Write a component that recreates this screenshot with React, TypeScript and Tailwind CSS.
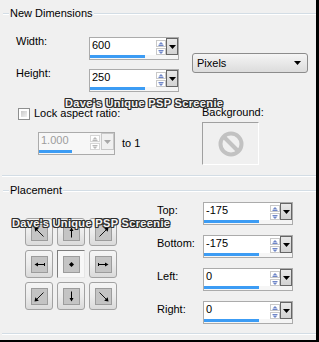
import type { ReactNode } from 'react';

const rule = 'h-[2px] border-t border-[#d3dde5] bg-white';

function GroupTitle({ label }: { label: string }) {
  return (
    <div className="flex h-[13px] items-center">
      <div className={`ml-[3px] w-[6px] ${rule}`} />
      <span className="px-[1px] leading-[13px]">{label}</span>
      <div className={`flex-1 ${rule}`} />
    </div>
  );
}

function SpinArrow({ up, disabled }: { up?: boolean; disabled?: boolean }) {
  const c = disabled ? '#b8b8b8' : '#6f86c8';
  return (
    <div className={`flex h-[7px] w-[10px] items-center justify-center border ${disabled ? 'border-[#d6d6d6]' : 'border-[#c9c9c9]'} bg-white`}>
      <svg width="6" height="4" viewBox="0 0 6 4">
        {up ? (
          <>
            <path d="M0.5 2.5h5L3 0z" fill={c} />
            <path d="M0.5 3.5h5" stroke={c} strokeWidth="1" />
          </>
        ) : (
          <>
            <path d="M0.5 1.5h5L3 4z" fill={c} />
            <path d="M0.5 0.5h5" stroke={c} strokeWidth="1" />
          </>
        )}
      </svg>
    </div>
  );
}

function SpinBox({ value, disabled }: { value: string; disabled?: boolean }) {
  return (
    <div
      className={`flex h-[23px] border border-[#ababab] ${disabled ? 'w-[77px] bg-[#f3f3f3]' : 'w-[90px] bg-[#f4f4f4]'}`}
    >
      <div className={`flex flex-col ${disabled ? 'w-[62px]' : 'w-[76px]'}`}>
        <div className={`flex h-[17px] ${disabled ? 'bg-[#f7f7f7]' : 'bg-white'}`}>
          <span className={`flex-1 pl-[2px] leading-[14px] ${disabled ? 'text-[#9d9d9d]' : 'text-black'}`}>{value}</span>
          <div className="flex w-[10px] flex-col gap-[1px] pt-[2px]">
            <SpinArrow up disabled={disabled} />
            <SpinArrow disabled={disabled} />
          </div>
        </div>
        <div className="h-[4px] bg-[#f6f6f6]">
          <div className={`h-[3px] bg-[#3c9cf4] ${disabled ? 'w-[33px]' : 'w-[55px]'}`} />
        </div>
      </div>
      <div
        className={`flex h-[17px] items-center justify-center border ${
          disabled ? 'ml-[1px] w-[13px] border-[#c8c8c8] bg-[#f0f0f0]' : 'w-[12px] border-[#666666] bg-linear-to-b from-[#e9e9e9] to-[#d2d2d2]'
        }`}
      >
        <svg width="7" height="4" viewBox="0 0 7 4">
          <path d="M0 0h7L3.5 4z" fill={disabled ? '#a8a8a8' : '#000'} />
        </svg>
      </div>
    </div>
  );
}

type Dir = 'nw' | 'n' | 'ne' | 'w' | 'c' | 'e' | 'sw' | 's' | 'se';

// thin shafts, small heads, like the PSP placement pad
const arrowShapes: Record<Dir, ReactNode> = {
  nw: (
    <>
      <path d="M4 4L11.5 11.5" stroke="#000" strokeWidth="0.9" />
      <path d="M2.5 2.5L6.8 3.3L3.3 6.8z" fill="#000" />
    </>
  ),
  n: (
    <>
      <path d="M7.5 5V12.5" stroke="#000" strokeWidth="1" />
      <path d="M7.5 2.5L9.5 6H5.5z" fill="#000" />
    </>
  ),
  ne: (
    <>
      <path d="M11 4L3.5 11.5" stroke="#000" strokeWidth="0.9" />
      <path d="M12.5 2.5L11.7 6.8L8.2 3.3z" fill="#000" />
    </>
  ),
  w: (
    <>
      <path d="M5 7.5H12.5M12.5 6V9" stroke="#000" strokeWidth="1" />
      <path d="M2.5 7.5L6 5.5V9.5z" fill="#000" />
    </>
  ),
  c: <path d="M7.5 5L10 7.5L7.5 10L5 7.5z" fill="#000" />,
  e: (
    <>
      <path d="M2.5 7.5H10M2.5 6V9" stroke="#000" strokeWidth="1" />
      <path d="M12.5 7.5L9 5.5V9.5z" fill="#000" />
    </>
  ),
  sw: (
    <>
      <path d="M4 11L11.5 3.5" stroke="#000" strokeWidth="0.9" />
      <path d="M2.5 12.5L3.3 8.2L6.8 11.7z" fill="#000" />
    </>
  ),
  s: (
    <>
      <path d="M7.5 2.5V10" stroke="#000" strokeWidth="1" />
      <path d="M7.5 12.5L9.5 9H5.5z" fill="#000" />
    </>
  ),
  se: (
    <>
      <path d="M3.5 3.5L11 11" stroke="#000" strokeWidth="0.9" />
      <path d="M12.5 12.5L8.2 11.7L11.7 8.2z" fill="#000" />
    </>
  ),
};

function ArrowButton({ dir }: { dir: Dir }) {
  const active = dir === 'c';
  return (
    <div
      className={`flex h-[28px] w-[28px] items-center justify-center ${
        active
          ? 'border border-t-[#7d7d7d] border-l-[#7d7d7d] border-r-[#e6e6e6] border-b-[#e6e6e6] bg-[#f7f7f7]'
          : 'rounded-[3px] border border-[#a2a2a2] bg-linear-to-b from-[#f5f5f5] via-[#ececec] to-[#dadada]'
      }`}
    >
      <div className="flex h-[17px] w-[17px] items-center justify-center border border-[#9c9c9c] bg-[#c4c4c4]">
        <svg width="15" height="15" viewBox="0 0 15 15">
          {arrowShapes[dir]}
        </svg>
      </div>
    </div>
  );
}

function Watermark({ className }: { className: string }) {
  return (
    <div
      className={`absolute whitespace-nowrap text-[11px] font-bold leading-[13px] tracking-[0.35px] text-[#f4f4f4] [text-shadow:1px_0_0_#2e2e2e,-1px_0_0_#2e2e2e,0_1px_0_#2e2e2e,0_-1px_0_#2e2e2e,1px_1px_0_#2e2e2e,-1px_-1px_0_#2e2e2e,1px_-1px_0_#2e2e2e,-1px_1px_0_#2e2e2e] ${className}`}
    >
      Dave's Unique PSP Screenie
    </div>
  );
}

const placements: Array<{ label: string; value: string }> = [
  { label: 'Top:', value: '-175' },
  { label: 'Bottom:', value: '-175' },
  { label: 'Left:', value: '0' },
  { label: 'Right:', value: '0' },
];

const dirs: Dir[] = ['nw', 'n', 'ne', 'w', 'c', 'e', 'sw', 's', 'se'];

export default function App() {
  return (
    <div className="relative h-[342px] w-[319px] overflow-hidden border-b-2 border-r-[3px] border-black bg-[#f0f0f0] font-['Liberation_Sans',Arial,sans-serif] text-[11px] text-black">
      <div className="h-[175px]">
        <div className="pt-[7px]">
          <GroupTitle label="New Dimensions" />
        </div>

        <div className="mt-[17px] flex pl-[16px]">
          <div className="flex flex-col gap-[9px]">
            <div className="flex h-[23px] items-start">
              <span className="-mt-[2px] w-[73px] leading-[13px]">Width:</span>
              <SpinBox value="600" />
            </div>
            <div className="flex h-[23px] items-start">
              <span className="-mt-[2px] w-[73px] leading-[13px]">Height:</span>
              <SpinBox value="250" />
            </div>
          </div>
          <div className="ml-[13px] mt-[16px] flex h-[20px] w-[116px] items-center justify-between rounded-[3px] border border-[#8c8c8c] bg-linear-to-b from-[#f5f5f5] to-[#dcdcdc] pl-[4px] pr-[6px]">
            <span className="leading-[13px]">Pixels</span>
            <svg width="7" height="4" viewBox="0 0 7 4">
              <path d="M0 0h7L3.5 4z" fill="#000" />
            </svg>
          </div>
        </div>

        <div className="mt-[14px] flex items-start">
          <div className="w-[202px] pl-[18px]">
            <div className="mt-[1px] flex items-center gap-[4px]">
              <div className="h-[12px] w-[12px] border border-[#8e8f8f] bg-white p-[2px]">
                <div className="h-full w-full bg-linear-to-br from-[#c9c9c9] to-[#f2f2f2]" />
              </div>
              <span className="leading-[13px]">Lock aspect ratio:</span>
            </div>
            <div className="mt-[12px] flex items-center pl-[20px]">
              <SpinBox value="1.000" disabled />
              <span className="ml-[7px] leading-[13px]">to 1</span>
            </div>
          </div>
          <div className="flex flex-col">
            <span className="leading-[13px]">Background:</span>
            <div className="mt-[3px] flex h-[43px] w-[57px] items-center justify-center border border-b-white border-l-[#a0a0a0] border-r-white border-t-[#a0a0a0]">
              <svg width="26" height="26" viewBox="0 0 26 26">
                <circle cx="13" cy="13" r="10.5" fill="none" stroke="#c2c2c2" strokeWidth="4" />
                <path d="M6 6L20 20" stroke="#c2c2c2" strokeWidth="4" />
              </svg>
            </div>
          </div>
        </div>
      </div>

      <div className={`ml-[2px] ${rule}`} />

      <div className="mt-[7px]">
        <GroupTitle label=" Placement" />
      </div>

      <div className="mt-[5px] flex items-start">
        <div className="ml-[25px] mt-[16px] grid grid-cols-3 gap-[4px]">
          {dirs.map((d) => (
            <ArrowButton key={d} dir={d} />
          ))}
        </div>
        <div className="ml-[40px] flex flex-col gap-[10px]">
          {placements.map((p) => (
            <div key={p.label} className="flex h-[23px] items-start">
              <span className="mt-[2px] w-[46px] leading-[13px]">{p.label}</span>
              <SpinBox value={p.value} />
            </div>
          ))}
        </div>
      </div>

      <div className={`ml-[2px] mt-[9px] ${rule}`} />

      <Watermark className="left-[65px] top-[97px]" />
      <Watermark className="left-[12px] top-[217px]" />
    </div>
  );
}
